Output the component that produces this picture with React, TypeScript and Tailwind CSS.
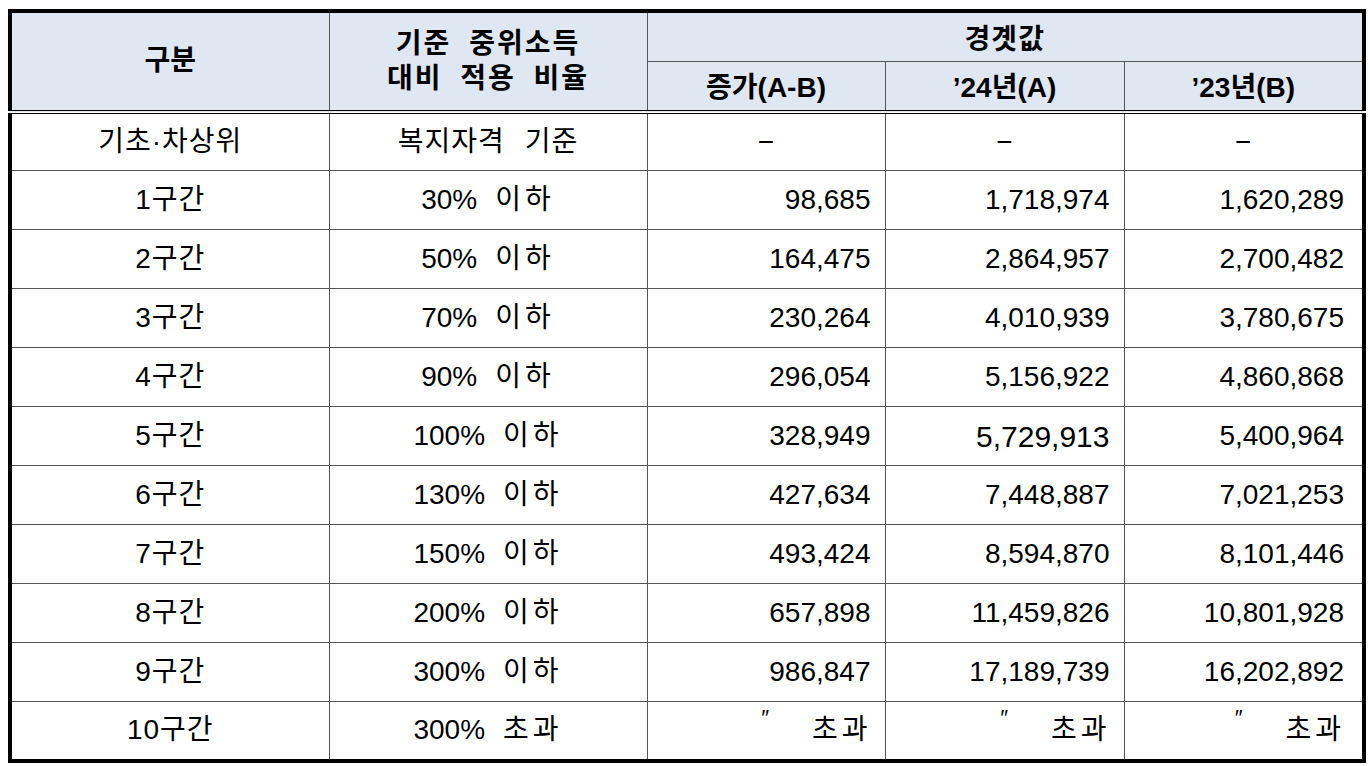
type Row = {
    label: string;
    ratio: string;
    diff: string;
    cur: string;
    prev: string;
};

const rows: Row[] = [
    { label: "기초·차상위", ratio: "복지자격 기준", diff: "−", cur: "−", prev: "−" },
    { label: "1구간", ratio: "30% 이하", diff: "98,685", cur: "1,718,974", prev: "1,620,289" },
    { label: "2구간", ratio: "50% 이하", diff: "164,475", cur: "2,864,957", prev: "2,700,482" },
    { label: "3구간", ratio: "70% 이하", diff: "230,264", cur: "4,010,939", prev: "3,780,675" },
    { label: "4구간", ratio: "90% 이하", diff: "296,054", cur: "5,156,922", prev: "4,860,868" },
    { label: "5구간", ratio: "100% 이하", diff: "328,949", cur: "5,729,913", prev: "5,400,964" },
    { label: "6구간", ratio: "130% 이하", diff: "427,634", cur: "7,448,887", prev: "7,021,253" },
    { label: "7구간", ratio: "150% 이하", diff: "493,424", cur: "8,594,870", prev: "8,101,446" },
    { label: "8구간", ratio: "200% 이하", diff: "657,898", cur: "11,459,826", prev: "10,801,928" },
    { label: "9구간", ratio: "300% 이하", diff: "986,847", cur: "17,189,739", prev: "16,202,892" },
    { label: "10구간", ratio: "300% 초과", diff: "over", cur: "over", prev: "over" },
];

const Ratio: React.FC<{ text: string }> = ({ text }) => {
    const [pct, word] = text.split(" ");
    if (!word) return <span>{text}</span>;
    // percent part stays latin, the korean word is spaced out like the original
    if (pct.endsWith("%")) {
        return (
            <span>
                {pct}
                <span className="ml-[18px] tracking-[4px]">{word}</span>
            </span>
        );
    }
    return (
        <span className="tracking-[1px]">
            {pct}
            <span className="ml-[20px]">{word}</span>
        </span>
    );
};

const NumberCell: React.FC<{ value: string; strong?: boolean; pad?: string }> = ({ value, strong, pad = "pr-[14px]" }) => {
    if (value === "−") {
        return <td className="border border-[#555] text-center">−</td>;
    }
    if (value === "over") {
        return (
            <td className={`border border-[#555] ${pad}`}>
                <div className="flex items-start justify-end pr-[3px]">
                    <span className="mt-[-8px] text-[22px] italic">″</span>
                    <span className="ml-[44px] tracking-[4px] mr-[-4px]">초과</span>
                </div>
            </td>
        );
    }
    return (
        <td className={`border border-[#555] text-right ${pad} ${strong ? "text-[30px]" : ""}`}>
            {value}
        </td>
    );
};

export default function App() {
    return (
        <div className="min-h-screen bg-white pl-[8px] pt-[9px]">
            <table className="w-[1354px] table-fixed border-collapse border-[4px] border-black text-[28px] text-black font-['Liberation_Sans','Noto_Sans_CJK_KR',sans-serif]">
                <colgroup>
                    <col className="w-[319px]" />
                    <col className="w-[318px]" />
                    <col className="w-[238px]" />
                    <col className="w-[239px]" />
                    <col className="w-[240px]" />
                </colgroup>
                <thead className="bg-[#dfe8f2] font-bold">
                    <tr className="h-[50px]">
                        <th rowSpan={2} className="border border-[#555] font-bold">
                            구분
                        </th>
                        <th rowSpan={2} className="border border-[#555] font-bold leading-[35px]">
                            <div className="tracking-[2px] [word-spacing:8px]">기준 중위소득</div>
                            <div className="tracking-[2px] [word-spacing:8px]">대비 적용 비율</div>
                        </th>
                        <th colSpan={3} className="border border-[#555] pt-[6px] font-bold tracking-[1px]">
                            경곗값
                        </th>
                    </tr>
                    <tr className="h-[50px]">
                        <th className="border border-[#555] pt-[4px] font-bold">증가(A-B)</th>
                        <th className="border border-[#555] pt-[4px] font-bold">’24년(A)</th>
                        <th className="border border-[#555] pt-[4px] font-bold">’23년(B)</th>
                    </tr>
                </thead>
                <tbody>
                    {rows.map((r, i) => (
                        <tr
                            key={r.label}
                            className={`h-[59px] ${i === 0 ? "border-t-[4px] border-double border-t-black" : ""}`}
                        >
                            <td className="border border-[#555] text-center tracking-[1px]">{r.label}</td>
                            <td className="border border-[#555] text-center">
                                <Ratio text={r.ratio} />
                            </td>
                            <NumberCell value={r.diff} />
                            <NumberCell value={r.cur} strong={r.label === "5구간"} />
                            <NumberCell value={r.prev} pad="pr-[18px]" />
                        </tr>
                    ))}
                </tbody>
            </table>
        </div>
    );
}
